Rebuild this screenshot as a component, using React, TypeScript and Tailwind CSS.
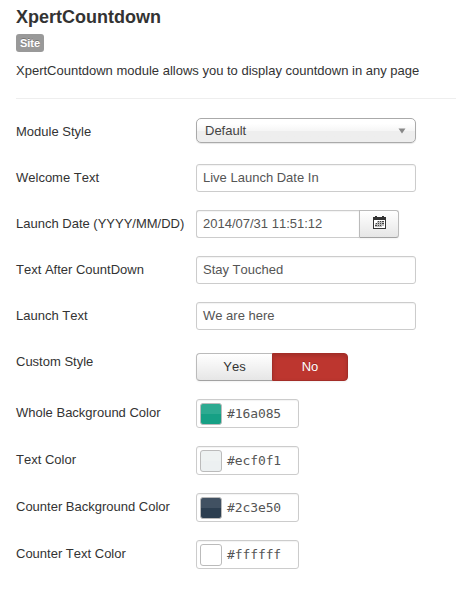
import type { ReactNode } from 'react';

function Row({ label, height, children }: { label: string; height: string; children: ReactNode }) {
  return (
    <div className={`flex items-start ${height}`}>
      <label className="w-[180px] shrink-0 whitespace-nowrap pt-[5px]">{label}</label>
      {children}
    </div>
  );
}

function TextBox({ value }: { value: string }) {
  return (
    <div className="h-7 w-[220px] rounded-[3px] border border-[#ccc] px-1.5 pt-1 text-[#555] shadow-[inset_0_1px_1px_rgba(0,0,0,0.05)]">
      {value}
    </div>
  );
}

function ColorBox({ value, swatch }: { value: string; swatch: string }) {
  return (
    <div className="flex h-[29px] w-[103px] items-center rounded-[3px] border border-[#ccc] pl-[3px] font-['DejaVu_Sans_Mono',monospace] text-[13px] tracking-[-0.1px] text-[#555] shadow-[inset_0_1px_1px_rgba(0,0,0,0.05)]">
      <span className={`mr-[5px] h-[22px] w-[22px] overflow-hidden rounded-[3px] border border-[#bbb] ${swatch}`}>
        <span className="block h-[10px] bg-white/10" />
      </span>
      {value}
    </div>
  );
}

export default function App() {
  return (
    <main className="h-[603px] w-[456px] overflow-hidden bg-white pl-4 font-['Liberation_Sans',Arial,sans-serif] text-[13px] leading-[18px] text-[#333] [font-kerning:none]">
      <h1 className="pt-[7px] text-[18px] font-bold leading-5">XpertCountdown</h1>
      <div className="mt-[7px] h-[18px] w-7 rounded-[3px] bg-[#999] text-center text-[11px] font-bold leading-[18px] text-white [text-shadow:0_-1px_0_rgba(0,0,0,0.25)]">
        Site
      </div>
      <p className="mt-[10px] whitespace-nowrap">XpertCountdown module allows you to display countdown in any page</p>
      <hr className="mt-[18px] mb-[19px] border-[#eee]" />

      <Row label="Module Style" height="h-[46px]">
        <div className="flex h-[25px] w-[220px] items-center justify-between rounded-[5px] border border-[#aaa] bg-linear-to-b from-white from-20% via-[#f6f6f6] via-50% to-[#eee] to-52% pl-2 pr-[9px] text-[#444] shadow-[0_1px_1px_rgba(0,0,0,0.1)]">
          <span>Default</span>
          <svg width="8" height="6" viewBox="0 0 8 6" fill="#888"><path d="M0.5 0.5h7L4 5.5Z" /></svg>
        </div>
      </Row>
      <Row label="Welcome Text" height="h-[46px]"><TextBox value="Live Launch Date In" /></Row>
      <Row label="Launch Date (YYYY/MM/DD)" height="h-[46px]">
        <div className="h-7 w-[163px] rounded-l-[3px] border border-r-0 border-[#ccc] px-1.5 pt-1 text-[#555] shadow-[inset_0_1px_1px_rgba(0,0,0,0.05)]">
          2014/07/31 11:51:12
        </div>
        <button className="flex h-7 w-10 items-start justify-center rounded-r-[3px] border border-[#bbb] border-b-[#a2a2a2] bg-linear-to-b from-white to-[#e6e6e6] pt-[5px] shadow-[0_1px_2px_rgba(0,0,0,0.05)]" aria-label="Choose date">
          <svg width="13" height="13" viewBox="0 0 13 13" shapeRendering="crispEdges">
            <path fill="#333" d="M0 1h2V0h2v1h5V0h2v1h2v12H0Z" />
            <path fill="#fff" d="M1 4h11v8H1Z" />
            <path fill="#bbb" d="M4 5h7v5H9v1H2V7h2Z" />
            <path fill="#444" d="M5 5h1v1H5zM7 5h1v1H7zM9 5h2v1H9zM3 7h1v1H3zM5 7h1v1H5zM7 7h1v1H7zM9 7h2v1H9zM2 9h2v1H2zM5 9h1v1H5zM7 9h1v1H7z" />
          </svg>
        </button>
      </Row>
      <Row label="Text After CountDown" height="h-[46px]"><TextBox value="Stay Touched" /></Row>
      <Row label="Launch Text" height="h-[46px]"><TextBox value="We are here" /></Row>
      <Row label="Custom Style" height="h-[51px]">
        <div className="mt-[5px] flex h-7 w-[152px] text-center leading-[26px]">
          <button className="w-[76px] rounded-l border border-r-0 border-[#bbb] border-b-[#a2a2a2] bg-linear-to-b from-white to-[#e6e6e6] shadow-[0_1px_2px_rgba(0,0,0,0.05)]">Yes</button>
          <button className="w-[76px] rounded-r border border-[#a32d27] bg-[#bd362f] text-white shadow-[inset_0_2px_4px_rgba(0,0,0,0.15),0_1px_2px_rgba(0,0,0,0.05)] [text-shadow:0_-1px_0_rgba(0,0,0,0.25)]">No</button>
        </div>
      </Row>
      <Row label="Whole Background Color" height="h-[47px]"><ColorBox value="#16a085" swatch="bg-[#16a085]" /></Row>
      <Row label="Text Color" height="h-[47px]"><ColorBox value="#ecf0f1" swatch="bg-[#ecf0f1]" /></Row>
      <Row label="Counter Background Color" height="h-[47px]"><ColorBox value="#2c3e50" swatch="bg-[#2c3e50]" /></Row>
      <Row label="Counter Text Color" height="h-[47px]"><ColorBox value="#ffffff" swatch="bg-white" /></Row>
    </main>
  );
}
